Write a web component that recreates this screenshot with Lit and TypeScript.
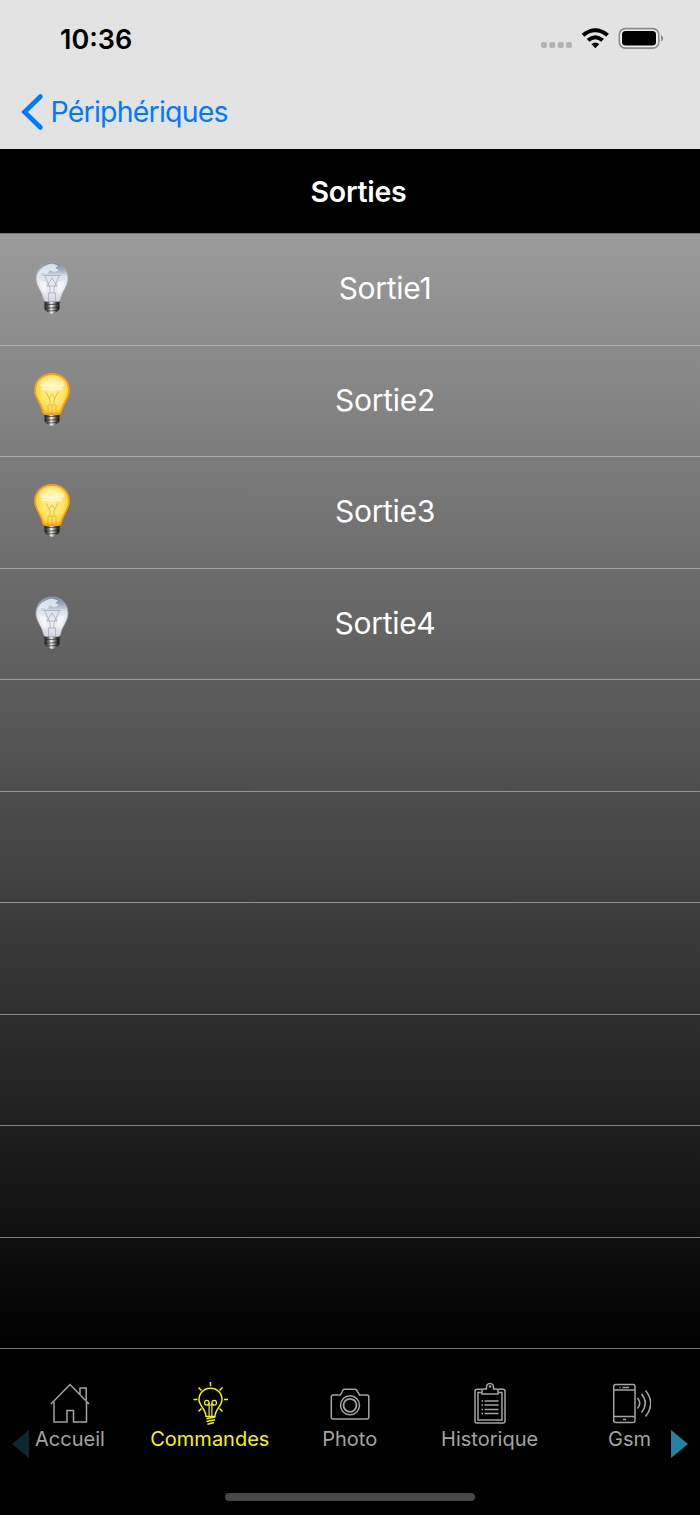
import { LitElement, html, css, svg } from "lit";
import { customElement, property } from "lit/decorators.js";

@customElement("bulb-icon")
class BulbIcon extends LitElement {
  @property({ type: Boolean }) on = false;

  static styles = css`
    :host { display: block; width: 40px; height: 56px; }
    svg { display: block; }
  `;

  render() {
    const glass = "M20 2C10 2 3 9 3 18.500C3 26 9 31 10.800 39Q11.200 41.500 13 42H27Q28.800 41.500 29.200 39C31 31 37 26 37 18.500C37 9 30 2 20 2Z";
    const clear = "M20 2C10.500 2 4 9 4 18.500C4 26 9.500 31 11.200 38Q11.600 40.800 13 41.500H27Q28.400 40.800 28.800 38C30.500 31 36 26 36 18.500C36 9 29.500 2 20 2Z";
    return html`
      <svg width="40" height="56" viewBox="0 0 40 56">
        <defs>
          <radialGradient id="lit" cx=".5" cy=".45" r=".56">
            <stop offset="0" stop-color="#fff08a" />
            <stop offset=".6" stop-color="#ffe566" />
            <stop offset=".85" stop-color="#ffd443" />
            <stop offset="1" stop-color="#fbae1a" />
          </radialGradient>
          <linearGradient id="off" x1="0" y1="0" x2="0" y2="1">
            <stop offset="0" stop-color="#74869f" />
            <stop offset=".22" stop-color="#a5b3c6" />
            <stop offset=".36" stop-color="#dde2ea" />
            <stop offset=".7" stop-color="#eceef2" />
            <stop offset="1" stop-color="#d0d4dc" />
          </linearGradient>
          <linearGradient id="metal">
            <stop offset="0" stop-color="#1c1c1c" />
            <stop offset=".25" stop-color="#666" />
            <stop offset=".45" stop-color="#f4f4f4" />
            <stop offset=".6" stop-color="#aaa" />
            <stop offset=".8" stop-color="#444" />
            <stop offset="1" stop-color="#111" />
          </linearGradient>
          <linearGradient id="shine" x1="0" y1="0" x2="0" y2="1">
            <stop offset="0" stop-color="#fff" stop-opacity=".15" />
            <stop offset="1" stop-color="#fff" stop-opacity=".7" />
          </linearGradient>
        </defs>
        <path d="M12.500 41H27.500V49Q26.500 51.500 23.500 52.500Q20 55 16.500 52.500Q13.500 51.500 12.500 49Z" fill="url(#metal)" />
        <path d="M13 44.800L27 44M13 48.300L27 47.500M15 51L25 50.500" stroke="#222" stroke-width=".8" opacity=".8" />
        ${this.on
          ? svg`
            <path d=${glass} fill="url(#lit)" stroke="#f8a010" stroke-width="1.800" />
            <path d="M7.500 14C8.500 7 13 4 20 4S31.500 7 32.500 14Q28 16.500 20 16T7.500 14Z" fill="url(#shine)" />
            <path d="M9.500 16.500Q20 18.500 30.500 16.500" stroke="#fffbe0" stroke-width="1.600" fill="none" />
            <path d="M14 20L18 28V32M26 20L22 28V32M17 26L20 22L23 26M16 41V33H24V41M20 33V41" stroke="#c7a53c" stroke-width=".8" fill="none" opacity=".75" />`
          : svg`
            <path d=${clear} fill="url(#off)" stroke="#9fa8b6" stroke-width=".8" />
            <path d="M8.500 9Q13 4.500 20 3.500L26 5.500L23.500 8L27 10.500L22 12L18 10.500L15 14L10 13L6 16Q6 12 8.500 9Z" fill="#eef2f6" opacity=".8" />
            <path d="M11 15.500H29M13 16L18 28V33M27 16L22 28V33M15 26L20 18L25 26H15M16.500 41V33H23.500V41" stroke="#929daf" stroke-width=".8" fill="none" opacity=".75" />
            <path d="M7 20Q9 29 14 34V22ZM33 20Q31 29 26 34V22Z" fill="#fff" opacity=".55" />`}
      </svg>
    `;
  }
}

const tabs = [
  {
    name: "Accueil",
    cls: "t1",
    icon: svg`<path d="M1 22L20 2.500L39 22M4 20V40H17V28.500H23.500V40H36.500V20M30 12V6H36.200V18" />`,
  },
  {
    name: "Commandes",
    cls: "t2 active",
    icon: svg`<g stroke-width="1.500"><path d="M16 34.500C16 27 9 24 9 17.500C9 11 14 6.200 20.500 6.200S32 11 32 17.500C32 24 25 27 25 34.500ZM20.500 0V4.200M3.500 17.500H7.500M34 17.500H38M8.500 5.500L11.500 8.500M32.500 5.500L29.500 8.500M8.500 29.500L11.500 26.500M32.500 29.500L29.500 26.500" /><g stroke-width="1.200"><circle cx="16.800" cy="20.700" r="2.300" /><circle cx="24.200" cy="20.700" r="2.300" /><path d="M19.100 20.700V34M21.900 20.700V34M16.800 23H24.200" /></g><path d="M16.500 36.800L25 35M16.500 39.500L25 37.700M17.500 42.200L24 40.500" /></g>`,
  },
  {
    name: "Photo",
    cls: "t3",
    icon: svg`<path d="M3 13Q1.300 13 1.300 15V35Q1.300 37 3 37H37Q38.800 37 38.800 35V15Q38.800 13 37 13H29.500L26.500 8Q26 7.200 25 7.200H14.500Q13.500 7.200 13 8L10.500 13Z" /><circle cx="20" cy="23.300" r="9.500" /><circle cx="20" cy="23.300" r="6.500" stroke-width="1.800" />`,
  },
  {
    name: "Historique",
    cls: "t4",
    icon: svg`<path d="M12 7.200H7Q5 7.200 5 9V39Q5 41 7 41H33Q35 41 35 39V9Q35 7.200 33 7.200H28M12 10.500H8V38H32V10.500H28M12 12V8.500Q12 7 14 7H16.500Q16 1.500 20 1.500T23.500 7H26Q28 7 28 8.500V12Z" /><circle cx="20" cy="4.500" r=".6" /><path d="M11.500 19H13M14.500 19H28.500M11.500 23H13M14.500 23H28.500M11.500 27.500H13M14.500 27.500H28.500M11.500 31.500H13M14.500 31.500H28.500" />`,
  },
  {
    name: "Gsm",
    cls: "t5",
    icon: svg`<rect x="3.700" y="2.500" width="21.300" height="38" rx="2" /><path d="M3.700 8H25M3.700 34.500H25M9.500 5.500H10.500M12.500 5.500H19M13 37.500H16" /><path stroke-width="1.600" d="M27.500 16Q32 21 27.500 26.500M31.500 12Q39 21 31.500 30.500M35.500 8.500Q46 21 35.500 34.500" />`,
  },
];

@customElement("app-root")
class AppRoot extends LitElement {
  static styles = css`
    :host {
      display: flex; flex-direction: column; width: 700px; height: 1515px;
      background: #000; color: #fff; overflow: hidden;
      font-family: Inter, "Liberation Sans", sans-serif; white-space: nowrap;
    }
    * { box-sizing: border-box; }
    svg { display: block; flex: none; }
    .top { height: 149px; background: #e3e3e3; flex: none; }
    .status { height: 76px; display: flex; align-items: center; padding: 1px 36px 0 60px; justify-content: space-between; }
    .status svg { margin-top: -2px; }
    .time { color: #000; font-size: 27px; font-weight: 600; letter-spacing: 0; margin-top: 1px; }
    .back { height: 73px; display: flex; align-items: center; padding: 0 0 2px 20px; color: #007aff; }
    .back-label { font-size: 28.5px; letter-spacing: -0.8px; margin-left: 5.5px; }
    .title { height: 84px; flex: none; display: flex; align-items: center; justify-content: center; padding: 0 0 0 17px; font-size: 28.5px; font-weight: 600; letter-spacing: -0.25px; }
    .list { height: 1116px; flex: none; display: grid; grid-template-rows: repeat(10, 1fr); background: linear-gradient(#9b9b9b, #000); border-top: 1px solid #777; }
    .row { display: flex; align-items: center; border-bottom: 1px solid rgba(200, 200, 200, 0.6); padding: 0 0 2px 32px; }
    .row-label { flex: 1; text-align: center; padding: 0 2px 0 0; font-size: 30px; letter-spacing: -0.3px; }
    .tabbar { flex: 1; display: flex; position: relative; padding-top: 33px; }
    .tab { width: 139.900px; flex: none; display: flex; flex-direction: column; align-items: center; color: #a3a3a3; font-size: 20px; letter-spacing: 0; }
    .tab svg { fill: none; stroke: currentColor; stroke-width: 1.500; }
    .tab-label { line-height: 26px; margin-top: 1px; }
    .active { color: #f5f500; }
    .prev, .next { position: absolute; top: 81px; }
    .prev { left: 12px; }
    .next { left: 671px; }
    .home { position: absolute; left: 225px; top: 144px; width: 250px; height: 8px; border-radius: 4px; background: #484848; }
  `;

  render() {
    const rows = ["Sortie1", "Sortie2", "Sortie3", "Sortie4", "", "", "", "", "", ""];
    return html`
      <header class="top">
        <div class="status">
          <span class="time">10:36</span>
          <svg width="124" height="28" viewBox="540 24 124 28">
            <g fill="#b3b3b3">
              <rect x="541" y="42" width="6" height="6" rx="2" />
              <rect x="549.300" y="42" width="6" height="6" rx="2" />
              <rect x="557.700" y="42" width="6" height="6" rx="2" />
              <rect x="566" y="42" width="6" height="6" rx="2" />
            </g>
            <g fill="none" stroke="#000" stroke-width="4">
              <path d="M583 35.200Q595.300 25.200 607.600 35.200" />
              <path d="M588 40.300Q595.300 34.200 602.600 40.300" />
            </g>
            <path d="M591.300 44Q595.300 41 599.300 44L595.300 48.300Z" />
            <rect x="619.300" y="28.600" width="39.500" height="19.500" rx="6" fill="#eee" stroke="#8c8c8c" stroke-width="1.600" />
            <rect x="622" y="31" width="34" height="14.500" rx="3.500" />
            <path d="M661 35Q663.200 36 663.200 38.300T661 41.600Z" fill="#8c8c8c" />
          </svg>
        </div>
        <div class="back">
          <svg width="25" height="38" viewBox="0 0 25 38">
            <path d="M20.500 3.500L4.500 19L20.500 34.500" fill="none" stroke="#007aff" stroke-width="4.600" stroke-linecap="round" />
          </svg>
          <span class="back-label">Périphériques</span>
        </div>
      </header>
      <div class="title">Sorties</div>
      <main class="list">
        ${rows.map((r, i) => html`<div class="row">
          ${r ? html`<bulb-icon ?on=${i === 1 || i === 2}></bulb-icon><span class="row-label">${r}</span>` : ""}
        </div>`)}
      </main>
      <nav class="tabbar">
        ${tabs.map((t) => html`<div class="tab ${t.cls}">
          <svg width="42" height="43" viewBox="-1 0 42 43">${t.icon}</svg>
          <span class="tab-label">${t.name}</span>
        </div>`)}
        <svg class="prev" width="17" height="28"><path d="M0 14L17 0V28Z" fill="#0b2731" /></svg>
        <svg class="next" width="17" height="28"><path d="M17 14L0 0V28Z" fill="#2581a4" /></svg>
        <div class="home"></div>
      </nav>
    `;
  }
}
